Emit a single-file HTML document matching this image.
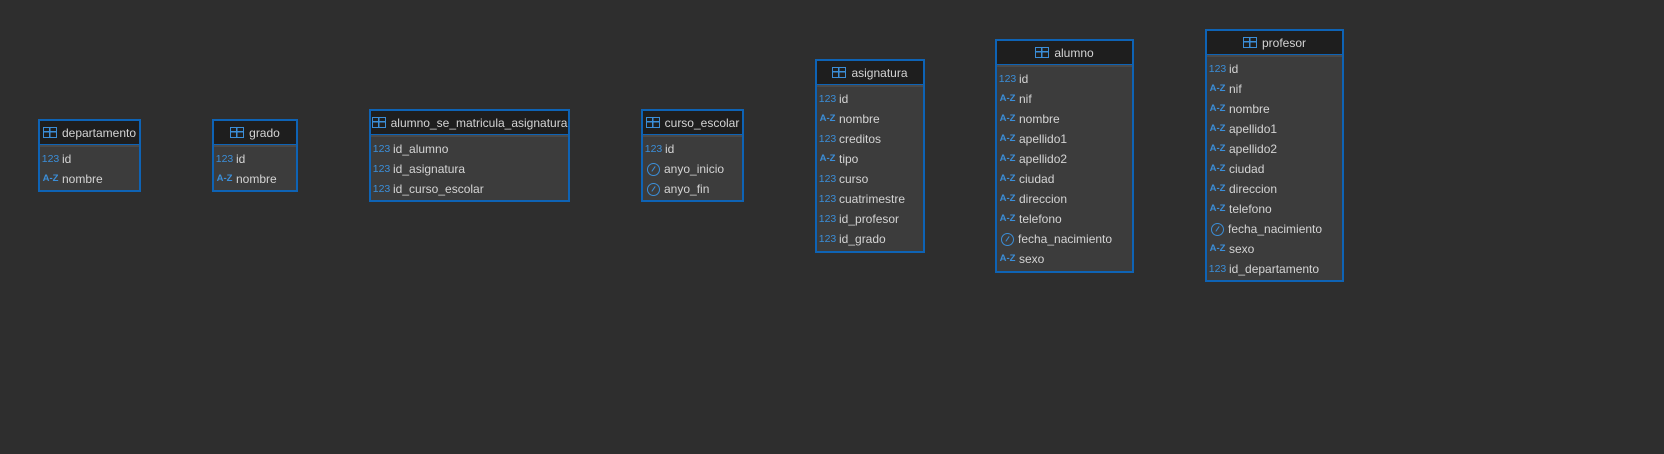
<!DOCTYPE html>
<html><head><meta charset="utf-8"><style>
body{margin:0;width:1664px;height:454px;background:#2e2e2e;font-family:"Liberation Sans","DejaVu Sans",sans-serif;overflow:hidden;position:relative}
.t{position:absolute;border:2px solid #0e63b5;background:#3c3c3c;box-sizing:border-box}
.h{height:23px;background:#1e1e1e;border-bottom:1px solid #0e63b5;color:#d4d4d4;font-size:12px;display:flex;align-items:center;justify-content:center;gap:5px;white-space:nowrap}
.b{border-top:2px solid #4a4a4a;padding-top:2px}
.r{height:20px;display:flex;align-items:center;font-size:12px;color:#d4d4d4;padding-left:1px;white-space:nowrap;line-height:1}
.i{width:19px;font-size:9.5px;color:#3b8ed8;text-align:center;margin-right:2px;font-weight:bold;line-height:1}
.n{font-weight:normal;font-size:10.5px}
.tb{flex:none;width:14px;height:11px;border:1.5px solid #3b8ed8;box-sizing:border-box;position:relative;background:linear-gradient(#3b8ed8,#3b8ed8) 0 3px/100% 1.5px no-repeat,linear-gradient(#3b8ed8,#3b8ed8) 5px 0/1.5px 100% no-repeat}
.c{flex:none;width:13px;height:13px;border:1.3px solid #3b8ed8;border-radius:50%;box-sizing:border-box;position:relative;margin:0 4px 0 3px}
.c:after{content:"";position:absolute;left:5px;top:2px;width:1.3px;height:6px;background:#3b8ed8;transform:rotate(35deg)}
</style></head><body>

<div class="t" style="left:38px;top:119px;width:103px;height:73px"><div class="h"><span class="tb"></span>departamento</div><div class="b">
<div class="r"><span class="i n">123</span>id</div><div class="r"><span class="i">A-Z</span>nombre</div></div></div>

<div class="t" style="left:212px;top:119px;width:86px;height:73px"><div class="h"><span class="tb"></span>grado</div><div class="b">
<div class="r"><span class="i n">123</span>id</div><div class="r"><span class="i">A-Z</span>nombre</div></div></div>

<div class="t" style="left:369px;top:109px;width:201px;height:93px"><div class="h"><span class="tb"></span>alumno_se_matricula_asignatura</div><div class="b">
<div class="r"><span class="i n">123</span>id_alumno</div><div class="r"><span class="i n">123</span>id_asignatura</div><div class="r"><span class="i n">123</span>id_curso_escolar</div></div></div>

<div class="t" style="left:641px;top:109px;width:103px;height:93px"><div class="h"><span class="tb"></span>curso_escolar</div><div class="b">
<div class="r"><span class="i n">123</span>id</div><div class="r"><span class="c"></span>anyo_inicio</div><div class="r"><span class="c"></span>anyo_fin</div></div></div>

<div class="t" style="left:815px;top:59px;width:110px;height:194px"><div class="h"><span class="tb"></span>asignatura</div><div class="b">
<div class="r"><span class="i n">123</span>id</div><div class="r"><span class="i">A-Z</span>nombre</div><div class="r"><span class="i n">123</span>creditos</div><div class="r"><span class="i">A-Z</span>tipo</div><div class="r"><span class="i n">123</span>curso</div><div class="r"><span class="i n">123</span>cuatrimestre</div><div class="r"><span class="i n">123</span>id_profesor</div><div class="r"><span class="i n">123</span>id_grado</div></div></div>

<div class="t" style="left:995px;top:39px;width:139px;height:234px"><div class="h"><span class="tb"></span>alumno</div><div class="b">
<div class="r"><span class="i n">123</span>id</div><div class="r"><span class="i">A-Z</span>nif</div><div class="r"><span class="i">A-Z</span>nombre</div><div class="r"><span class="i">A-Z</span>apellido1</div><div class="r"><span class="i">A-Z</span>apellido2</div><div class="r"><span class="i">A-Z</span>ciudad</div><div class="r"><span class="i">A-Z</span>direccion</div><div class="r"><span class="i">A-Z</span>telefono</div><div class="r"><span class="c"></span>fecha_nacimiento</div><div class="r"><span class="i">A-Z</span>sexo</div></div></div>

<div class="t" style="left:1205px;top:29px;width:139px;height:253px"><div class="h"><span class="tb"></span>profesor</div><div class="b">
<div class="r"><span class="i n">123</span>id</div><div class="r"><span class="i">A-Z</span>nif</div><div class="r"><span class="i">A-Z</span>nombre</div><div class="r"><span class="i">A-Z</span>apellido1</div><div class="r"><span class="i">A-Z</span>apellido2</div><div class="r"><span class="i">A-Z</span>ciudad</div><div class="r"><span class="i">A-Z</span>direccion</div><div class="r"><span class="i">A-Z</span>telefono</div><div class="r"><span class="c"></span>fecha_nacimiento</div><div class="r"><span class="i">A-Z</span>sexo</div><div class="r"><span class="i n">123</span>id_departamento</div></div></div>

</body></html>
